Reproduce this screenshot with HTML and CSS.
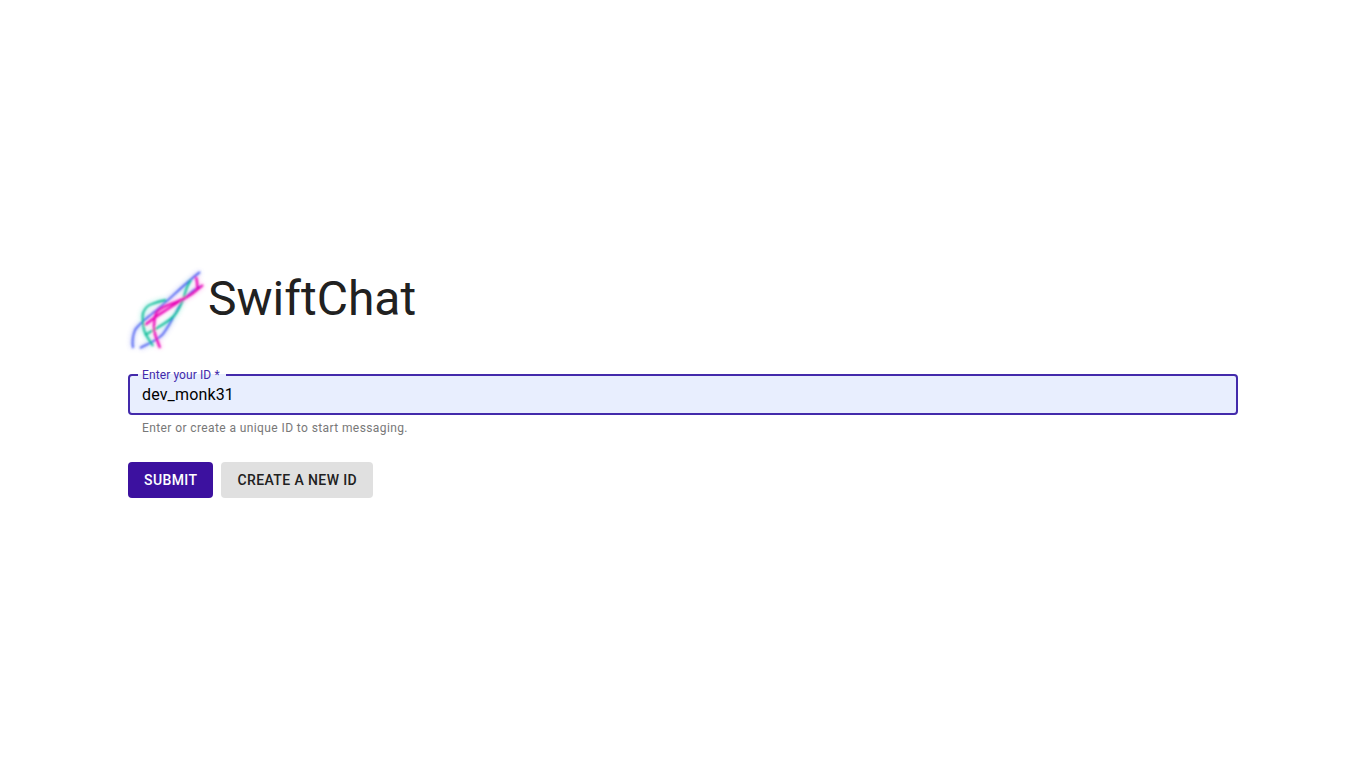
FILE: index.html
```html
<!DOCTYPE html>
<html lang="en">
<head>
<meta charset="utf-8">
<title>SwiftChat</title>
<link rel="stylesheet" href="styles.css">
</head>
<body>
<main class="container">
  <header class="brand">
    <svg class="logo" width="80" height="80" viewBox="0 0 80 80" fill="none" aria-hidden="true">
      <defs>
        <filter id="glow" x="-30%" y="-30%" width="160%" height="160%"><feGaussianBlur stdDeviation="2.4"/></filter>
        <filter id="soft" x="-10%" y="-10%" width="120%" height="120%"><feGaussianBlur stdDeviation="0.85"/></filter>
        <g id="blue">
          <path d="M5 78C4 72 5 65 7 60C12 53 18 49 25 43C38 33 55 15 72 2"/>
          <path d="M12 78C20 74 30 70 35 64C42 55 47 44 52 35C55 30 57 27 60 25C64 21 68 19 72 16"/>
        </g>
        <g id="teal">
          <path d="M25 76C22 71 18 66 16 60C15 54 14 48 15 43C17 38 20 35 24 34C29 32 33 31 38 30"/>
          <path d="M17 65C24 61 31 57 37 53C42 50 47 46 50 40C54 34 56 27 58 20C59 16 61 13 63 10"/>
        </g>
        <g id="pink">
          <path d="M17 55C22 51 27 47 35 42C43 37 50 32 57 28C62 25 67 23 69 19C70 15 69 11 68 7"/>
          <path d="M32 78C30 72 27 66 26 60C26 54 26 48 28 43C31 39 35 37 40 35C46 33 51 31 57 28C63 25 69 20 75 15"/>
        </g>
      </defs>
      <g filter="url(#glow)" opacity=".3" stroke-width="4">
        <use href="#blue" stroke="#5a6cf0"/>
        <use href="#teal" stroke="#19d3b4"/>
        <use href="#pink" stroke="#ff30d8"/>
      </g>
      <g filter="url(#soft)">
        <use href="#blue" stroke="#3a50f0" stroke-width="1.6"/>
        <use href="#teal" stroke="#00b892" stroke-width="1.8"/>
        <use href="#pink" stroke="#e800b4" stroke-width="2.1"/>
      </g>
    </svg>
    <h1 class="title">SwiftChat</h1>
  </header>
  <form class="form">
    <div class="field">
      <label class="field-label" for="user-id">Enter your ID *</label>
      <input class="field-input" id="user-id" type="text" value="dev_monk31">
      <fieldset class="field-outline" aria-hidden="true"><legend class="field-notch"></legend></fieldset>
    </div>
    <p class="helper">Enter or create a unique ID to start messaging.</p>
    <div class="actions">
      <button class="btn btn-primary" type="button">Submit</button>
      <button class="btn btn-secondary" type="button">Create a new ID</button>
    </div>
  </form>
</main>
</body>
</html>
```
FILE: styles.css
```css
* { box-sizing: border-box; }
html, body { height: 100%; }
body {
  margin: 0;
  background: #fff;
  color: #212121;
  font-family: Roboto, "Liberation Sans", sans-serif;
}
.container {
  height: 100%;
  width: 1110px;
  margin: 0 auto;
  display: flex;
  flex-direction: column;
  justify-content: center;
}
.brand { display: flex; align-items: flex-start; height: 80px; }
.logo { flex: none; display: block; overflow: visible; }
.title {
  margin: 0;
  padding-top: 1px;
  font-size: 48px;
  font-weight: 400;
  line-height: 56px;
  color: #212121;
}
.form { margin-top: 24px; }
.field { position: relative; height: 41px; }
.field-input {
  display: block;
  width: 100%;
  height: 100%;
  border: 0;
  outline: 0;
  margin: 0;
  padding: 0 14px 1px;
  border-radius: 4px;
  background: #e8eefe;
  color: #000;
  font: 400 16px Roboto, sans-serif;
  letter-spacing: .15px;
}
.field-outline {
  position: absolute;
  inset: -5px 0 0;
  margin: 0;
  padding: 0 8px;
  border: 2px solid #432aab;
  border-radius: 4px;
  pointer-events: none;
}
.field-notch { width: 88px; height: 11px; padding: 0; line-height: 0; }
.field-label {
  position: absolute;
  left: 14px;
  top: -6px;
  z-index: 1;
  font-size: 12px;
  line-height: 14px;
  letter-spacing: .1px;
  color: #432aab;
}
.helper {
  margin: 6px 14px 0;
  font-size: 12px;
  line-height: 14px;
  letter-spacing: .4px;
  color: #787878;
}
.actions { display: flex; gap: 8px; margin-top: 27px; }
.btn {
  height: 36px;
  padding: 0 16px;
  border: 0;
  border-radius: 4px;
  font: 500 14px Roboto, sans-serif;
  letter-spacing: .4px;
  text-transform: uppercase;
}
.btn-primary { background: #3c119f; color: #fff; }
.btn-secondary { background: #e0e0e0; color: #212121; }
```
